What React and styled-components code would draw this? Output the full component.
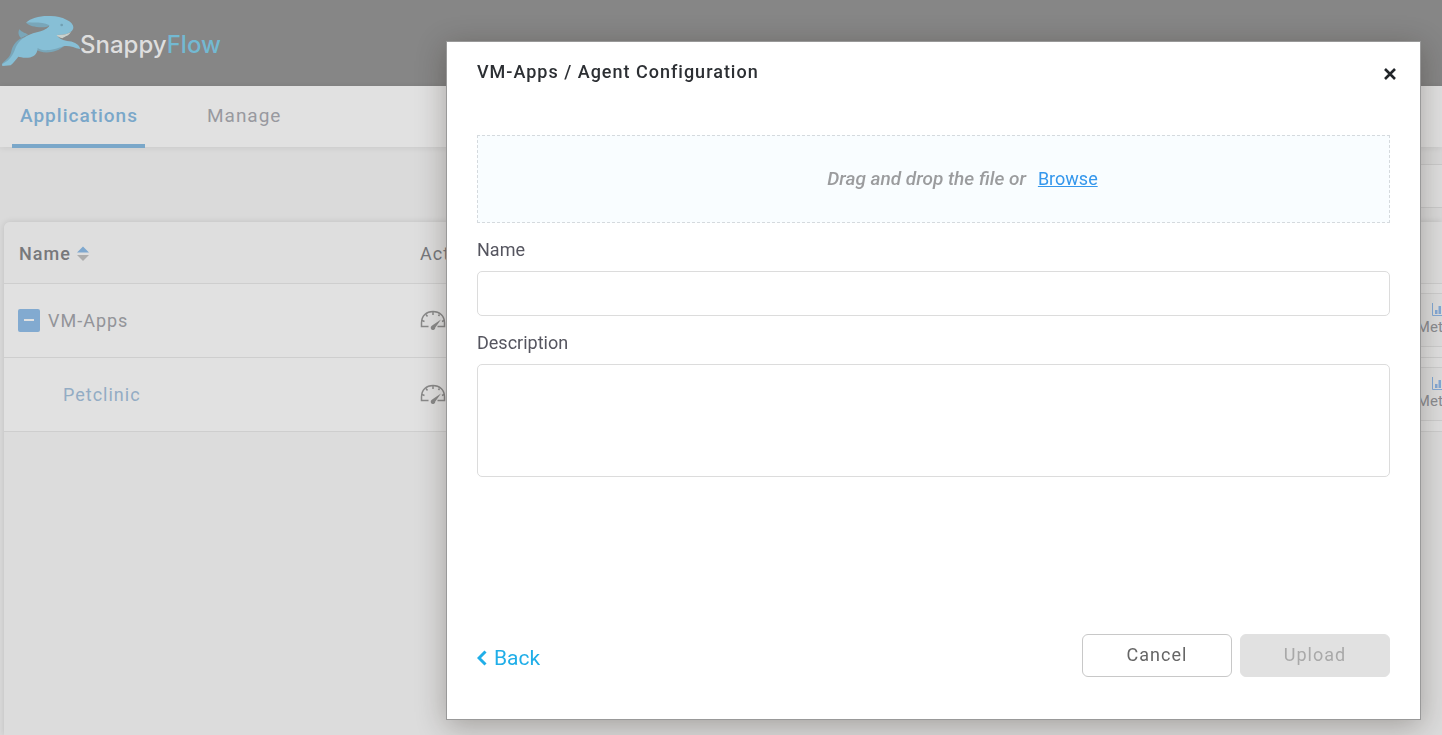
import React from "react";
import styled, { createGlobalStyle } from "styled-components";

const GlobalStyle = createGlobalStyle`
  *, *::before, *::after { box-sizing: border-box; }
  body {
    margin: 0;
    background: #dadada;
    font-family: Roboto, "Liberation Sans", sans-serif;
    font-size: 18px;
    color: #55555f;
    overflow: hidden;
  }
  button, input, textarea { font-family: inherit; }
`;

const Page = styled.div`
  min-height: 100vh;
  display: flex;
  flex-direction: column;
  overflow: hidden;
`;

const TopBar = styled.header`
  height: 86px;
  display: flex;
  align-items: flex-start;
  background: #868686;
`;

const Brand = styled.a`
  display: flex;
  align-items: flex-start;
  padding-top: 14px;
  text-decoration: none;
  svg { display: block; }
`;

const BrandName = styled.span`
  padding-top: 15px;
  font-family: Inter, sans-serif;
  font-size: 24px;
  font-weight: 500;
  line-height: 32px;
  color: #dedede;
  em { font-style: normal; color: #73b9d2; }
`;

const Tabs = styled.nav`
  height: 61px;
  display: flex;
  align-items: flex-start;
  gap: 54px;
  padding-left: 12px;
  background: #e1e1e1;
  box-shadow: 0 1px 6px rgba(0, 0, 0, 0.08);
`;

const Tab = styled.a`
  height: 62px;
  padding: 0 7px 0 8px;
  border-bottom: 4px solid ${(p) => (p.$active ? "#7aa7c9" : "transparent")};
  font-size: 19px;
  font-weight: ${(p) => (p.$active ? 500 : 400)};
  line-height: 60px;
  letter-spacing: 1px;
  text-decoration: none;
  color: ${(p) => (p.$active ? "#7aa7c9" : "#98999f")};
`;

const Toolbar = styled.div`
  display: flex;
  justify-content: flex-end;
  padding: 17px 0 14px;
`;

const Search = styled.input`
  width: 300px;
  height: 44px;
  border: 1px solid #cbcbcb;
  border-right: 0;
  background: #dfdfdf;
`;

const Card = styled.main`
  flex: 1;
  margin-left: 4px;
  border-radius: 6px 0 0 0;
  background: #dcdcdc;
  box-shadow: 0 0 6px rgba(0, 0, 0, 0.12);
  overflow: hidden;
`;

const Table = styled.table`
  width: calc(100% + 60px);
  table-layout: fixed;
  border-collapse: collapse;
  th, td {
    padding: 0 0 0 15px;
    border-bottom: 1px solid #cecece;
    text-align: left;
    letter-spacing: 1px;
    white-space: nowrap;
  }
  th {
    height: 61px;
    padding-top: 3px;
    background: #dedede;
    font-weight: 500;
    color: #77787b;
  }
  td {
    height: 74px;
    background: #e1e1e1;
    color: #939499;
  }
`;

const PlainHeading = styled.span`
  font-weight: 400;
`;

const Col = styled.col`
  width: ${(p) => p.$width};
`;

const CellRow = styled.div`
  display: flex;
  align-items: center;
  gap: ${(p) => (p.$tight ? "6px" : "8px")};
  padding-left: ${(p) => (p.$nested ? "44px" : "0")};
  a { color: #93acc4; text-decoration: none; }
  svg { display: block; }
`;

const Collapse = styled.button`
  width: 22px;
  height: 23px;
  display: grid;
  place-items: center;
  margin-left: -1px;
  padding: 0;
  border: 0;
  border-radius: 2px;
  background: #82aad0;
`;

const IconButton = styled.button`
  display: block;
  padding: 3px 0 0;
  border: 0;
  background: none;
`;

const MetricsButton = styled.button`
  width: 80px;
  height: 54px;
  display: flex;
  flex-direction: column;
  align-items: center;
  justify-content: center;
  gap: 1px;
  padding: 0 0 3px;
  border: 1px solid #cecece;
  background: #dedede;
  font-size: 15px;
  line-height: 18px;
  color: #8c8d92;
`;

const Overlay = styled.div`
  position: fixed;
  inset: 0;
  display: flex;
  padding: 41px 21px 15px 446px;
`;

const Dialog = styled.section`
  flex: 1;
  min-width: 0;
  display: flex;
  flex-direction: column;
  padding: 18px 30px 42px;
  border: 1px solid #999;
  background: #fff;
  box-shadow: 0 6px 28px rgba(30, 20, 10, 0.3);
`;

const DialogHead = styled.div`
  display: flex;
  align-items: center;
  justify-content: space-between;
  height: 24px;
`;

const DialogTitle = styled.h1`
  margin: 0;
  font-size: 18px;
  font-weight: 500;
  line-height: 24px;
  letter-spacing: 1px;
  color: #2c2f33;
`;

const CloseButton = styled.button`
  margin-right: -7px;
  padding: 4px 0 0;
  border: 0;
  background: none;
  svg { display: block; }
`;

const Form = styled.form`
  flex: 1;
  display: flex;
  flex-direction: column;
  padding-top: 51px;
`;

const DropZone = styled.div`
  height: 88px;
  display: flex;
  align-items: center;
  justify-content: center;
  gap: 12px;
  margin-bottom: 14px;
  padding-left: 58px;
  border: 1px dashed #d5dade;
  background: #f9fdff;
  font-size: 18px;
  line-height: 24px;
  em { font-size: 19px; font-weight: 500; color: #9b9c9e; }
  a { color: #3597ec; }
`;

const Label = styled.label`
  margin-bottom: 8px;
  line-height: 26px;
  color: #55555f;
`;

const TextInput = styled.input`
  width: 100%;
  height: 45px;
  margin-bottom: 14px;
  padding: 0 12px;
  border: 1px solid #dcdcdc;
  border-radius: 5px;
  font-size: 18px;
  background: #fff;
`;

const TextBox = styled.textarea`
  width: 100%;
  height: 113px;
  padding: 8px 12px;
  border: 1px solid #dcdcdc;
  border-radius: 5px;
  font-size: 18px;
  background: #fff;
  resize: none;
`;

const Footer = styled.div`
  display: flex;
  align-items: center;
  gap: 8px;
  margin-top: auto;
`;

const BackButton = styled.button`
  display: flex;
  align-items: center;
  gap: 7px;
  margin-right: auto;
  padding: 4px 0 0;
  border: 0;
  background: none;
  font-size: 21px;
  line-height: 24px;
  color: #20aee8;
`;

const FormButton = styled.button`
  width: 150px;
  height: 43px;
  padding: 0 0 2px;
  border: 1px solid ${(p) => (p.disabled ? "#e1e1e1" : "#c8c8c8")};
  border-radius: 6px;
  background: ${(p) => (p.disabled ? "#e1e1e1" : "#fff")};
  font-size: 18px;
  letter-spacing: 1px;
  color: ${(p) => (p.disabled ? "#a9a9a9" : "#666")};
`;

const Rabbit = () => (
  <svg width="80" height="54" viewBox="0 42 240 162" aria-hidden="true">
    <path d="M58 88C53 98 56 108 63 114L84 104C76 98 66 98 58 88Z" fill="#79a6b9" />
    <path d="M78 68C90 80 118 84 142 80L156 72L140 60Z" fill="#79a6b9" />
    <path d="M34 154C38 134 52 118 72 112L60 160L24 190L5 193C10 184 30 176 34 154Z" fill="#79a6b9" />
    <path d="M105 146C126 164 168 160 192 138L160 120Z" fill="#79a6b9" />
    <path d="M78 68C92 54 120 47 147 48C166 47 184 51 199 59C212 64 221 74 220 84C217 96 204 102 188 104L171 105C176 116 190 122 208 124C224 126 240 136 240 147C224 143 208 136 194 138C178 142 164 150 142 150C128 152 119 148 113 144C112 162 102 172 84 173C70 175 60 170 55 170C48 178 40 189 32 196L8 198C4 196 6 192 11 190C28 182 40 164 45 148C51 128 68 112 88 104C102 97 120 96 132 90C142 85 150 79 147 75C130 66 104 68 78 68Z" fill="#87bfd6" />
    <path d="M170 105C188 106 202 102 213 96C206 108 196 108 187 115C179 113 173 110 170 105Z" fill="#c9d1cd" />
    <circle cx="185" cy="75" r="4" fill="#6f9fb2" />
  </svg>
);

const SortIcon = () => (
  <svg width="12" height="16" viewBox="0 0 12 16" aria-hidden="true">
    <path d="M0 6.5L6 0.5L12 6.5Z" fill="#7fa8cf" />
    <path d="M0 9L6 15L12 9Z" fill="#adadad" />
  </svg>
);

const Gauge = () => (
  <svg width="26" height="22" viewBox="0 0 26 22" fill="none" stroke="#8a8a8a" aria-hidden="true">
    <path d="M8.500 17.500H1.500V14C1.500 6.500 6.500 2.500 13 2.500S24.500 6.500 24.500 14V17.500H17.500" strokeWidth="1.500" />
    <path d="M13 2.500V6M6 5.500L7.500 7.500M19.500 5.500L18.500 7M2 11.500L4.500 12.500M24 11.500L22 12.500" strokeWidth="1.500" />
    <path d="M21 10.500L15.300 18.500A2.300 2.300 0 1 1 11.800 16.800Z" fill="#8a8a8a" stroke="none" />
  </svg>
);

const Bars = () => (
  <svg width="20" height="15" viewBox="0 0 20 15" aria-hidden="true">
    <path d="M0.500 1V13.500H20" fill="none" stroke="#84a9d6" />
    <path d="M3 8H5.500V12H3ZM6.500 4H9V12H6.500ZM10 6H12.500V12H10ZM13.500 2H16V12H13.500Z" fill="#84a9d6" />
  </svg>
);

const ActionCells = () => (
  <>
    <td>
      <IconButton type="button" aria-label="Dashboard"><Gauge /></IconButton>
    </td>
    <td>
      <MetricsButton type="button"><Bars />Metrics</MetricsButton>
    </td>
  </>
);

export default function App() {
  return (
    <>
      <GlobalStyle />
      <Page>
        <TopBar>
          <Brand href="#">
            <Rabbit />
            <BrandName>Snappy<em>Flow</em></BrandName>
          </Brand>
        </TopBar>
        <Tabs>
          <Tab href="#" $active>Applications</Tab>
          <Tab href="#">Manage</Tab>
        </Tabs>
        <Toolbar>
          <Search type="search" aria-label="Search" />
        </Toolbar>
        <Card>
          <Table>
            <colgroup>
              <Col $width="401px" />
              <Col />
              <Col $width="115px" />
            </colgroup>
            <thead>
              <tr>
                <th><CellRow $tight>Name<SortIcon /></CellRow></th>
                <th><PlainHeading>Actions</PlainHeading></th>
                <th aria-label="Metrics" />
              </tr>
            </thead>
            <tbody>
              <tr>
                <td>
                  <CellRow>
                    <Collapse type="button" aria-label="Collapse">
                      <svg width="10" height="2" viewBox="0 0 10 2" aria-hidden="true">
                        <path d="M0 1H10" stroke="#e1e1e1" strokeWidth="2" />
                      </svg>
                    </Collapse>
                    VM-Apps
                  </CellRow>
                </td>
                <ActionCells />
              </tr>
              <tr>
                <td><CellRow $nested><a href="#">Petclinic</a></CellRow></td>
                <ActionCells />
              </tr>
            </tbody>
          </Table>
        </Card>
      </Page>
      <Overlay>
        <Dialog role="dialog" aria-labelledby="dialog-title">
          <DialogHead>
            <DialogTitle id="dialog-title">VM-Apps / Agent Configuration</DialogTitle>
            <CloseButton type="button" aria-label="Close">
              <svg width="14" height="14" viewBox="0 0 14 14" aria-hidden="true">
                <path d="M2 2L12 12M12 2L2 12" stroke="#212529" strokeWidth="2.600" />
              </svg>
            </CloseButton>
          </DialogHead>
          <Form>
            <DropZone>
              <em>Drag and drop the file or</em>
              <a href="#">Browse</a>
            </DropZone>
            <Label htmlFor="config-name">Name</Label>
            <TextInput id="config-name" type="text" />
            <Label htmlFor="config-description">Description</Label>
            <TextBox id="config-description" />
            <Footer>
              <BackButton type="button">
                <svg width="10" height="16" viewBox="0 0 10 16" aria-hidden="true">
                  <path d="M8.500 1.500L2 8L8.500 14.500" fill="none" stroke="#20aee8" strokeWidth="3" />
                </svg>
                Back
              </BackButton>
              <FormButton type="button">Cancel</FormButton>
              <FormButton type="submit" disabled>Upload</FormButton>
            </Footer>
          </Form>
        </Dialog>
      </Overlay>
    </>
  );
}
